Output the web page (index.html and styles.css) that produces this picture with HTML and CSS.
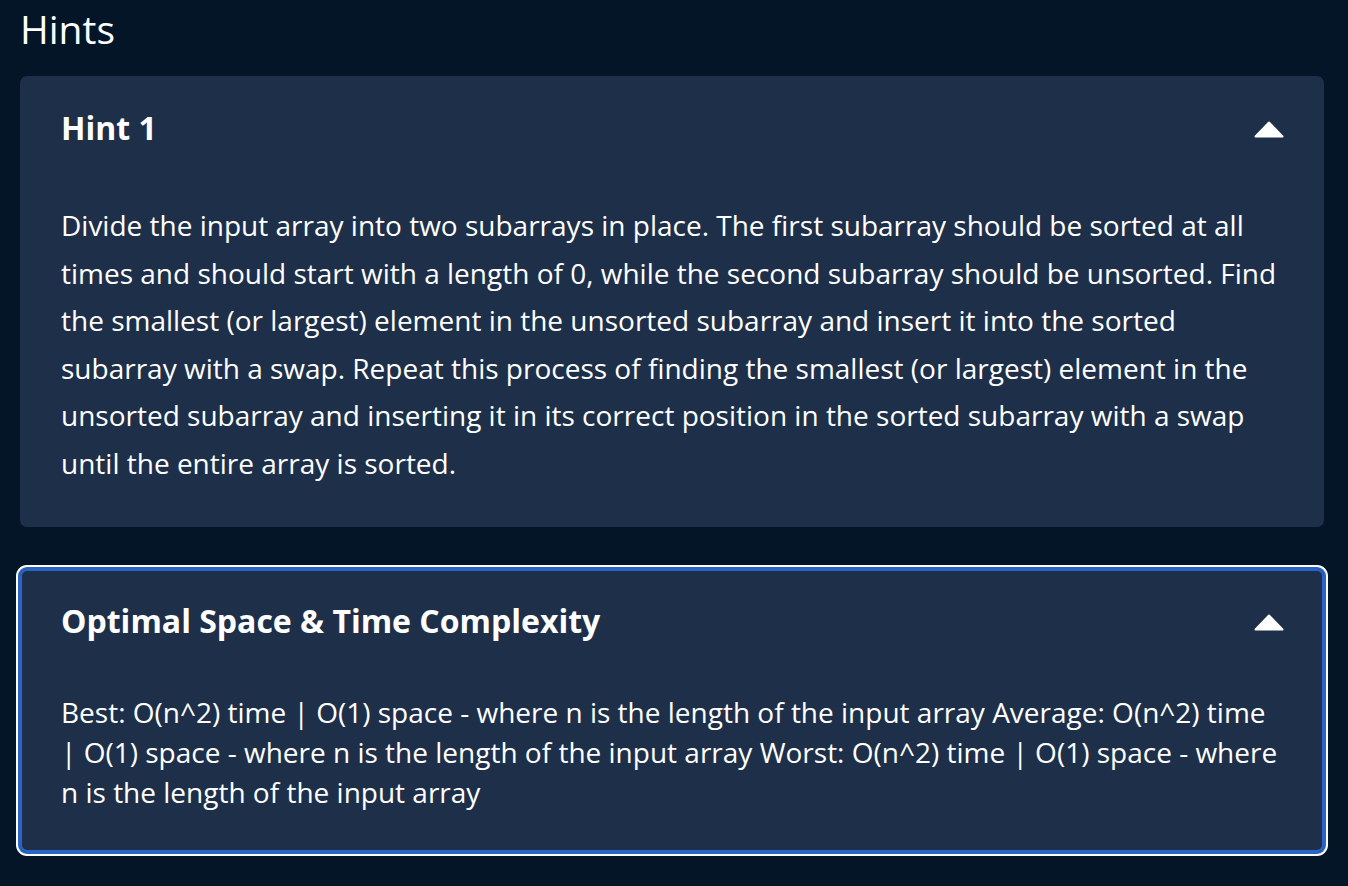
FILE: index.html
```html
<!DOCTYPE html>
<html>
<head>
<meta charset="utf-8">
<link rel="stylesheet" href="styles.css">
</head>
<body>
<main class="page">
  <h1 class="title">Hints</h1>
  <section class="card">
    <div class="card-head">
      <h2 class="card-title">Hint 1</h2>
      <svg class="chevron" width="30" height="17" viewBox="0 0 30 17"><path d="M15 1.5 L28.5 15.5 L1.5 15.5 Z" fill="#fff" stroke="#fff" stroke-width="2" stroke-linejoin="round"/></svg>
    </div>
    <p class="card-body hint">Divide the input array into two subarrays in place. The first subarray should be sorted at all times and should start with a length of 0, while the second subarray should be unsorted. Find the smallest (or largest) element in the unsorted subarray and insert it into the sorted subarray with a swap. Repeat this process of finding the smallest (or largest) element in the unsorted subarray and inserting it in its correct position in the sorted subarray with a swap until the entire array is sorted.</p>
  </section>
  <section class="card focused">
    <div class="card-head">
      <h2 class="card-title">Optimal Space &amp; Time Complexity</h2>
      <svg class="chevron" width="30" height="17" viewBox="0 0 30 17"><path d="M15 1.5 L28.5 15.5 L1.5 15.5 Z" fill="#fff" stroke="#fff" stroke-width="2" stroke-linejoin="round"/></svg>
    </div>
    <p class="card-body complexity">Best: O(n^2) time | O(1) space - where n is the length of the input array Average: O(n^2) time | O(1) space - where n is the length of the input array Worst: O(n^2) time | O(1) space - where n is the length of the input array</p>
  </section>
</main>
</body>
</html>
```
FILE: styles.css
```css
html, body {
  margin: 0;
  padding: 0;
  background: #041528;
}
body {
  font-family: "Open Sans", "Noto Sans", sans-serif;
  color: #ffffff;
}
.page {
  padding: 3px 24px 30px 20px;
  display: flex;
  flex-direction: column;
}
.title {
  margin: 0 0 21px 0;
  font-size: 39px;
  line-height: 52px;
  font-weight: 400;
}
.card {
  background: #1e3049;
  border-radius: 7px;
  padding: 32px 40px 40px 41px;
}
.card + .card {
  margin-top: 42px;
}
.focused {
  box-shadow: inset 0 0 0 2px #2a64c6, 0 0 0 2px #2a64c6, 0 0 0 4px #ffffff;
}
.card-head {
  display: flex;
  justify-content: space-between;
  align-items: center;
  height: 40px;
}
.card-title {
  margin: 0;
  font-size: 32px;
  line-height: 40px;
  font-weight: 700;
}
.chevron {
  display: block;
  margin-top: 2px;
}
.card-body {
  margin: 0;
  font-size: 28px;
  font-weight: 400;
}
.hint {
  margin-top: 54px;
  line-height: 47.5px;
}
.complexity {
  margin-top: 51px;
  margin-right: 6px;
  line-height: 40px;
}
```
